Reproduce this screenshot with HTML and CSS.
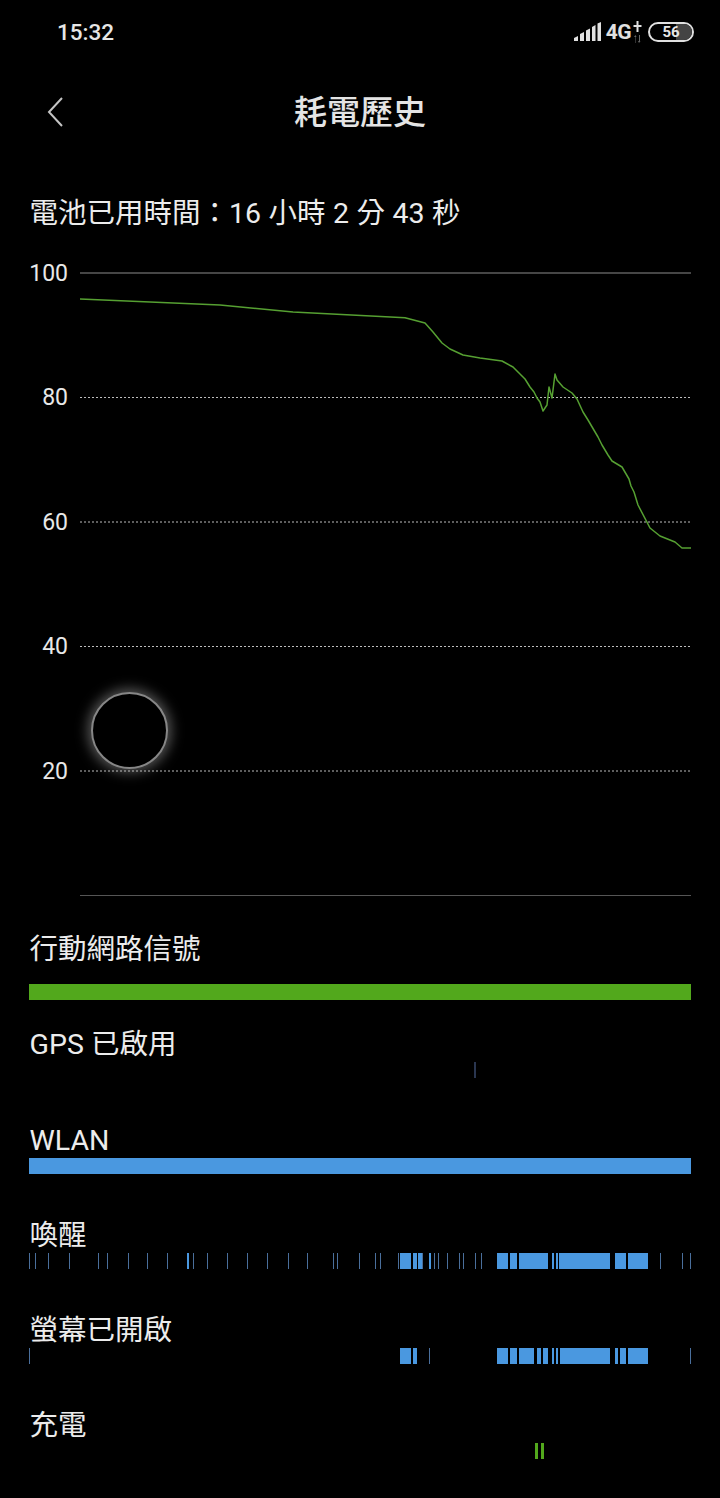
FILE: index.html
```html
<!DOCTYPE html>
<html lang="zh-Hant">
<head>
<meta charset="utf-8">
<title>耗電歷史</title>
<link rel="stylesheet" href="styles.css">
</head>
<body>
<div class="page">
  <div class="status">
    <span class="time">15:32</span>
    <div class="status-right">
      <svg class="signal" width="28" height="20" viewBox="0 0 28 20">
        <path d="M0 19v-3l4-2v5zM6 19v-7l4-2v9zM12 19v-10.500l4-2v12.500zM18 19v-14l3.500-2v16zM23.500 19v-17.500l3.500-1.500v19z"/>
      </svg>
      <span class="net">4G</span>
      <svg class="arrows" width="9" height="24" viewBox="0 0 9 24">
        <path class="plus" d="M3.500 1h2v4h3v2h-3v5h-2v-5h-3v-2h3z"/>
        <path class="updown" d="M2.500 23v-6h-1.500l1.500-2 1 2h-.5v6zM6 15v6h-1l1 2 1.500-2h-.5v-6z"/>
      </svg>
      <div class="battery"><span class="battery-num">56</span></div>
    </div>
  </div>

  <header class="header">
    <svg class="back" width="18" height="30" viewBox="0 0 18 30"><path d="M16 1 3 15l13 14"/></svg>
    <h1 class="title">耗電歷史</h1>
  </header>

  <p class="usage">電池已用時間：16 小時 2 分 43 秒</p>

  <div class="chart">
    <svg class="chart-svg" width="720" height="644" viewBox="0 258 720 644">
      <line class="grid-solid" x1="80" y1="273" x2="691" y2="273"/>
      <line class="grid-dot" x1="80" y1="397.500" x2="691" y2="397.500"/>
      <line class="grid-dot" x1="80" y1="522" x2="691" y2="522"/>
      <line class="grid-dot" x1="80" y1="646.500" x2="691" y2="646.500"/>
      <line class="grid-dot" x1="80" y1="771" x2="691" y2="771"/>
      <line class="grid-base" x1="80" y1="895.500" x2="691" y2="895.500"/>
      <text class="axis" x="68" y="281">100</text>
      <text class="axis" x="68" y="405">80</text>
      <text class="axis" x="68" y="530">60</text>
      <text class="axis" x="68" y="654">40</text>
      <text class="axis" x="68" y="779">20</text>
      <polyline class="curve" points="80,299 220,305 293,312 405,317.700 425,323 433,332 442,343 450,349 463,355 480,358 502,361 513,367 525,379 530,387 534,392 537,398 540,402 543,411 547,405 549,387 552,398 555,374 557,380 563,387 572,393 577,399 583,412 588,420 598,437 602,445 608,455 612,461 622,467 629,479 631,486 634,492 638,505 650,528 660,536 675,542 682,548 691,548"/>
    </svg>
    <div class="touch"></div>
  </div>

  <section class="rows">
    <div class="row row-first">
      <div class="label">行動網路信號</div>
      <svg class="bar" width="720" height="16"><rect class="green" x="29" y="0" width="662" height="16"/></svg>
    </div>
    <div class="row row-gps">
      <div class="label">GPS 已啟用</div>
      <svg class="bar" width="720" height="16"><rect class="faint" x="474" y="0" width="2" height="16"/></svg>
    </div>
    <div class="row row-wlan">
      <div class="label">WLAN</div>
      <svg class="bar" width="720" height="16"><rect class="blue" x="29" y="0" width="662" height="16"/></svg>
    </div>
    <div class="row">
      <div class="label">喚醒</div>
      <svg class="bar" id="wake" width="720" height="16"></svg>
    </div>
    <div class="row">
      <div class="label">螢幕已開啟</div>
      <svg class="bar" id="screen" width="720" height="16"></svg>
    </div>
    <div class="row">
      <div class="label">充電</div>
      <svg class="bar" width="720" height="16">
        <rect class="green" x="535" y="0" width="3" height="16"/>
        <rect class="green" x="541" y="0" width="3" height="16"/>
      </svg>
    </div>
  </section>
</div>
<script src="bars.js"></script>
</body>
</html>
```

FILE: styles.css
```css
* { box-sizing: border-box; }
html, body { margin: 0; padding: 0; background: #000; }
body { font-family: Roboto, "Noto Sans CJK TC", sans-serif; color: #ececec; }
.page { width: 720px; height: 1498px; overflow: hidden; background: #000; }

.status { height: 64px; display: flex; justify-content: space-between; align-items: center; padding: 0 26px 0 57px; }
.time { font-size: 22.500px; font-weight: 500; color: #e6e6e6; }
.status-right { display: flex; align-items: center; }
.signal { fill: #e0e0e0; display: block; }
.net { font-size: 21px; font-weight: 700; color: #e0e0e0; margin-left: 4px; letter-spacing: -.5px; }
.arrows { display: block; margin-left: 2px; }
.plus { fill: #e0e0e0; }
.updown { fill: #666; }
.battery { position: relative; width: 46px; height: 20px; margin-left: 6px; border: 2px solid #e0e0e0; border-radius: 10px; display: flex; align-items: center; justify-content: center; overflow: hidden; }
.battery::after { content: ""; position: absolute; right: 0; top: 0; bottom: 0; width: 16px; background: #444; }
.battery-num { position: relative; z-index: 1; font-size: 15px; font-weight: 700; color: #e6e6e6; line-height: 1; }

.header { height: 96px; display: flex; align-items: center; justify-content: center; position: relative; }
.back { position: absolute; left: 46px; top: 33px; fill: none; stroke: #c4c4c4; stroke-width: 2; }
.title { margin: 0; font-size: 33px; font-weight: 500; color: #e4e4e4; line-height: 1; }

.usage { margin: 26px 0 20px; height: 52px; line-height: 55px; padding-left: 29.500px; font-size: 28.500px; font-weight: 400; color: #ececec; white-space: nowrap; word-spacing: .4px; }

.chart { position: relative; height: 644px; }
.chart-svg { display: block; }
.grid-solid { stroke: #8c8c8c; stroke-width: 1; }
.grid-base { stroke: #555; stroke-width: 1; }
.grid-dot { stroke: #bdbdbd; stroke-width: 1; stroke-dasharray: 2 2; }
.axis { fill: #e8e8e8; font-size: 23px; text-anchor: end; font-family: Roboto, sans-serif; }
.curve { fill: none; stroke: #56a032; stroke-width: 1.500; stroke-linejoin: round; }
.touch { position: absolute; left: 91px; top: 434px; width: 77px; height: 77px; border-radius: 50%; background: #000; border: 2px solid #868686; box-shadow: 0 0 13px 3px rgba(200,200,200,.45); }

.row { padding-top: 43px; }
.row-first { padding-top: 28px; }
.row-gps { padding-top: 26px; }
.row-wlan { padding-top: 44px; }
.label { height: 36px; line-height: 38px; padding-left: 29.500px; font-size: 28.500px; color: #ececec; white-space: nowrap; }
.row-first .label { margin-bottom: 18px; line-height: 39px; }
.bar { display: block; }
.green { fill: #52a81c; }
.blue, .tick { fill: #4a98e0; }
.thin { fill: #4a6f9c; }
.faint { fill: #2a3650; }
```

FILE: bars.js
```js
var wake = [[29,1],[35,1],[48,1],[69,1],[98,1],[107,1],[128,1],[147,1],[167,1],[187,2],[193,1],[207,1],[227,1],[247,1],[267,1],[288,1],[307,1],[333,1],[337,1],[359,1],[375,1],[380,1],[398,1],[400,11],[413,4],[418,4],[422,1],[429,2],[434,1],[438,1],[447,1],[459,1],[463,1],[475,1],[481,1],[497,11],[510,7],[519,29],[552,2],[556,2],[559,51],[615,11],[628,20],[660,1],[682,1],[690,1]];
var screen = [[29,1],[400,11],[413,4],[429,1],[497,11],[510,7],[519,15],[537,4],[543,5],[552,2],[556,2],[560,50],[615,3],[620,6],[628,20],[690,1]];
function draw(id, list) {
  var svg = document.getElementById(id);
  list.forEach(function (b) {
    var r = document.createElementNS("http://www.w3.org/2000/svg", "rect");
    r.setAttribute("class", b[1] < 2 ? "tick thin" : "tick");
    r.setAttribute("x", b[0]);
    r.setAttribute("y", 0);
    r.setAttribute("width", b[1]);
    r.setAttribute("height", 16);
    svg.appendChild(r);
  });
}
draw("wake", wake);
draw("screen", screen);
```
